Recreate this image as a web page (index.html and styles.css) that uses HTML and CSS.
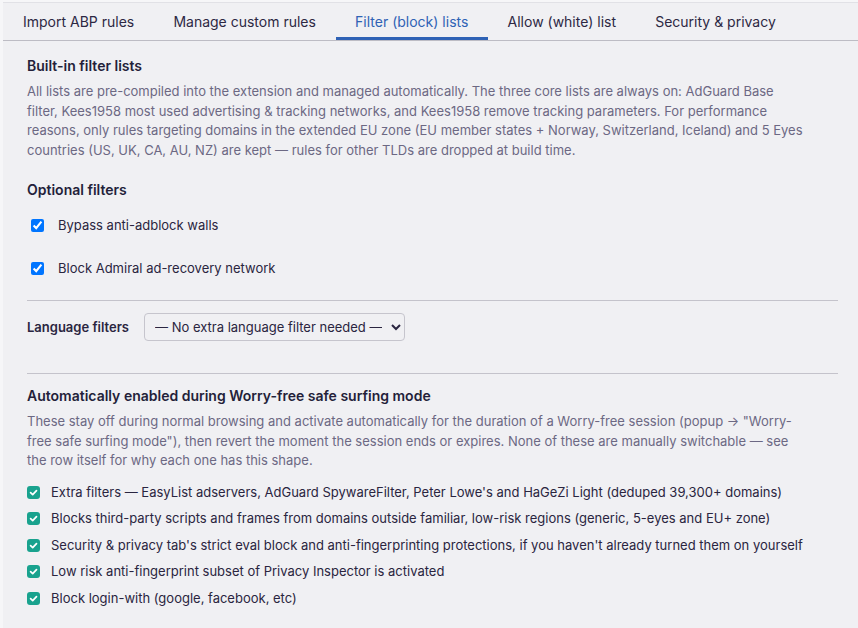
FILE: index.html
```html
<!DOCTYPE html>
<html lang="en">
  <head>
    <meta charset="UTF-8" />
    <meta name="viewport" content="width=device-width, initial-scale=1.0" />
    <title>Options</title>
    <link rel="stylesheet" href="styles.css">
  </head>
  <body>
    <div class="page">
      <!-- Tab bar -->
      <nav class="tabs">
        <button class="tab">Import ABP rules</button>
        <button class="tab">Manage custom rules</button>
        <button class="tab active">Filter (block) lists</button>
        <button class="tab">Allow (white) list</button>
        <button class="tab">Security &amp; privacy</button>
      </nav>

      <main class="content">
        <!-- Built-in lists -->
        <section class="section">
          <h2>Built-in filter lists</h2>
          <p class="hint">
            All lists are pre-compiled into the extension and managed automatically. The three core lists are always on: AdGuard Base
            filter, Kees1958 most used advertising &amp; tracking networks, and Kees1958 remove tracking parameters. For performance
            reasons, only rules targeting domains in the extended EU zone (EU member states + Norway, Switzerland, Iceland) and 5 Eyes
            countries (US, UK, CA, AU, NZ) are kept — rules for other TLDs are dropped at build time.
          </p>
        </section>

        <!-- Optional filters -->
        <section class="section optional">
          <h2>Optional filters</h2>
          <label class="option">
            <input type="checkbox" checked />
            <span>Bypass anti-adblock walls</span>
          </label>
          <label class="option">
            <input type="checkbox" checked />
            <span>Block Admiral ad-recovery network</span>
          </label>
        </section>

        <div class="language-row">
          <label for="langFilter">Language filters</label>
          <select id="langFilter">
            <option>— No extra language filter needed —</option>
          </select>
        </div>

        <!-- Worry-free mode -->
        <section class="section worry-free">
          <h2>Automatically enabled during Worry-free safe surfing mode</h2>
          <p class="hint">
            These stay off during normal browsing and activate automatically for the duration of a Worry-free session (popup → "Worry-free safe surfing mode"), then revert the moment the session ends or expires. None of these are manually switchable — see
            the row itself for why each one has this shape.
          </p>
          <ul class="auto-list">
            <li>
              <svg class="tick" width="13" height="13" viewBox="0 0 13 13"><rect width="13" height="13" rx="3" /><path d="M3.6 6.7 5.7 8.7 9.5 4.6" /></svg>
              Extra filters — EasyList adservers, AdGuard SpywareFilter, Peter Lowe's and HaGeZi Light (deduped 39,300+ domains)
            </li>
            <li>
              <svg class="tick" width="13" height="13" viewBox="0 0 13 13"><rect width="13" height="13" rx="3" /><path d="M3.6 6.7 5.7 8.7 9.5 4.6" /></svg>
              Blocks third-party scripts and frames from domains outside familiar, low-risk regions (generic, 5-eyes and EU+ zone)
            </li>
            <li>
              <svg class="tick" width="13" height="13" viewBox="0 0 13 13"><rect width="13" height="13" rx="3" /><path d="M3.6 6.7 5.7 8.7 9.5 4.6" /></svg>
              Security &amp; privacy tab's strict eval block and anti-fingerprinting protections, if you haven't already turned them on yourself
            </li>
            <li>
              <svg class="tick" width="13" height="13" viewBox="0 0 13 13"><rect width="13" height="13" rx="3" /><path d="M3.6 6.7 5.7 8.7 9.5 4.6" /></svg>
              Low risk anti-fingerprint subset of Privacy Inspector is activated
            </li>
            <li>
              <svg class="tick" width="13" height="13" viewBox="0 0 13 13"><rect width="13" height="13" rx="3" /><path d="M3.6 6.7 5.7 8.7 9.5 4.6" /></svg>
              Block login-with (google, facebook, etc)
            </li>
          </ul>
        </section>
      </main>
    </div>
  </body>
</html>
```

FILE: styles.css
```css
html {
  background-color: #f6f6f8;
}

body {
  font-family: Inter, "Noto Sans", sans-serif;
  margin: 0;
  color: #2a2540;
}

.page {
  margin: 2px 0 0 3px;
  border-top: 1px solid #e1e1e6;
  background-color: #f0f0f3;
  min-height: 625px;
}

/* Tabs */

.tabs {
  display: flex;
  border-bottom: 1px solid #bdbcc4;
}

.tab {
  font-family: inherit;
  font-size: 14px;
  line-height: 17px;
  color: #2d2843;
  background: none;
  border: none;
  border-bottom: 3px solid transparent;
  padding: 10px 19.6px 7px;
  cursor: pointer;
}

.tab:first-child {
  padding-left: 20px;
}

.tab.active {
  color: #2f62b5;
  border-bottom-color: #2f62b5;
}

/* Content */

.content {
  padding: 15px 20px 0 24px;
}

.section h2 {
  font-size: 14px;
  line-height: 20px;
  font-weight: 600;
  margin: 0;
  color: #241f3a;
}

.hint {
  font-size: 13px;
  line-height: 19.5px;
  color: #6c6883;
  margin: 6px 0 0;
  max-width: 780px;
}

.optional {
  margin-top: 20px;
  padding-bottom: 10px;
  border-bottom: 1px solid #c4c3cb;
}

.optional h2 {
  margin-bottom: 4px;
}

.option {
  display: flex;
  align-items: center;
  gap: 11px;
  font-size: 13px;
  line-height: 19px;
  padding: 12px 0;
}

.option input {
  margin: 0 3px 0 4px;
  width: 13px;
  height: 13px;
}

.language-row {
  display: flex;
  align-items: center;
  gap: 15px;
  padding: 12px 0 32px;
  border-bottom: 1px solid #c4c3cb;
}

.language-row label {
  font-size: 13px;
  font-weight: 600;
  color: #2a2540;
}

.language-row select {
  font-family: inherit;
  font-size: 13px;
  color: #2a2540;
  width: 261px;
  height: 28px;
  padding: 0 6px;
  border: 1px solid #c6c5cd;
  border-radius: 4px;
  background-color: #f0f0f3;
}

.worry-free {
  margin-top: 12px;
}

.auto-list {
  list-style: none;
  margin: 12px 0 0;
  padding: 0;
  display: flex;
  flex-direction: column;
  gap: 7px;
}

.auto-list li {
  display: flex;
  align-items: center;
  gap: 11px;
  font-size: 13px;
  line-height: 19.5px;
  color: #2a2540;
}

.tick {
  flex: none;
}

.tick rect {
  fill: #19a28e;
}

.tick path {
  fill: none;
  stroke: #fff;
  stroke-width: 1.7;
  stroke-linecap: round;
  stroke-linejoin: round;
}
```
